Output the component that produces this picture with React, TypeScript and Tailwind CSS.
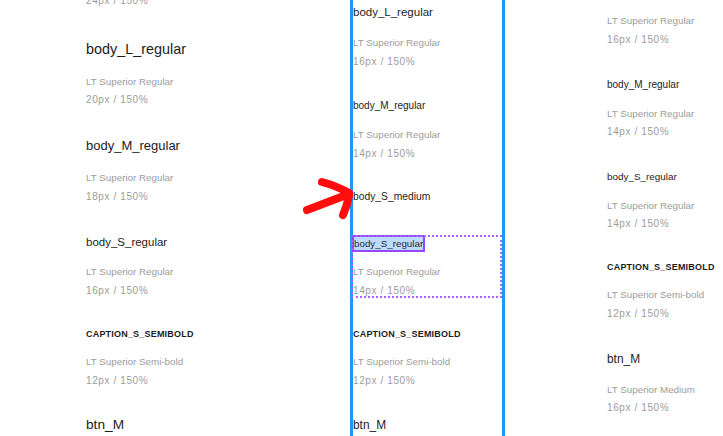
import React from "react";

function Title({ cls, children }: { cls: string; children: React.ReactNode }) {
  return (
    <div className={`h-[18px] leading-[18px] whitespace-nowrap text-[#1c1c1c] ${cls}`}>{children}</div>
  );
}

function Meta({ cls, name, size }: { cls: string; name: string; size: string }) {
  return (
    <div className={`text-[#9c9c9c] ${cls}`}>
      <div className="h-[18.5px] leading-[18.5px] text-[9.8px] whitespace-nowrap">{name}</div>
      <div className="h-[18.5px] leading-[18.5px] text-[10px] tracking-[0.6px] whitespace-nowrap">{size}</div>
    </div>
  );
}

export default function App() {
  return (
    <div className="relative flex w-[723px] h-[436px] overflow-hidden bg-white font-['Liberation_Sans',Arial,sans-serif]">
      {/* Left column */}
      <div className="w-[350px] shrink-0 pl-[86px] flex flex-col">
        <div className="-mt-[8px] h-[18.5px] leading-[18.5px] text-[10px] tracking-[0.6px] text-[#9c9c9c] whitespace-nowrap">
          24px / 150%
        </div>
        <Title cls="mt-[29px] text-[14.4px]">body_L_regular</Title>
        <Meta cls="mt-[15px]" name="LT Superior Regular" size="20px / 150%" />
        <Title cls="mt-[27.5px] text-[13px]">body_M_regular</Title>
        <Meta cls="mt-[14px]" name="LT Superior Regular" size="18px / 150%" />
        <Title cls="mt-[27px] text-[11.5px]">body_S_regular</Title>
        <Meta cls="mt-[12px]" name="LT Superior Regular" size="16px / 150%" />
        <Title cls="mt-[25px] text-[9px] font-bold tracking-[0.2px]">CAPTION_S_SEMIBOLD</Title>
        <Meta cls="mt-[10px]" name="LT Superior Semi-bold" size="12px / 150%" />
        <Title cls="mt-[25.5px] text-[13.7px]">btn_M</Title>
        <Meta cls="mt-[12px]" name="LT Superior Medium" size="16px / 150%" />
      </div>

      {/* Middle column framed */}
      <div className="w-[155px] shrink-0 h-full border-x-[3px] border-[#2196f3] flex flex-col">
        <Title cls="mt-[3px] text-[11.5px]">body_L_regular</Title>
        <Meta cls="mt-[13px]" name="LT Superior Regular" size="16px / 150%" />
        <Title cls="mt-[25.5px] text-[10px]">body_M_regular</Title>
        <Meta cls="mt-[11.5px]" name="LT Superior Regular" size="14px / 150%" />
        <Title cls="mt-[25px] text-[10.3px]">body_S_medium</Title>
        <div className="relative mt-[29px]">
          <div className="flex">
            <span className="-ml-[1px] h-[17px] border-2 border-[#9747ff] bg-[#bcdcff] text-[9.8px] leading-[13px] text-[#2a2a2a] whitespace-nowrap">
              body_S_regular
            </span>
          </div>
          <Meta cls="mt-[11px]" name="LT Superior Regular" size="14px / 150%" />
          <div className="pointer-events-none absolute -left-[2px] right-0 top-0 h-[63px] border-2 border-dotted border-[#a866ff]" />
        </div>
        <Title cls="mt-[25px] text-[9px] font-bold tracking-[0.2px]">CAPTION_S_SEMIBOLD</Title>
        <Meta cls="mt-[10px]" name="LT Superior Semi-bold" size="12px / 150%" />
        <Title cls="mt-[26px] text-[11.9px]">btn_M</Title>
      </div>

      {/* Right column */}
      <div className="pl-[102px] flex flex-col">
        <Meta cls="mt-[12px]" name="LT Superior Regular" size="16px / 150%" />
        <Title cls="mt-[26.5px] text-[10px]">body_M_regular</Title>
        <Meta cls="mt-[11.25px]" name="LT Superior Regular" size="14px / 150%" />
        <Title cls="mt-[25.75px] text-[9.9px]">body_S_regular</Title>
        <Meta cls="mt-[11.25px]" name="LT Superior Regular" size="14px / 150%" />
        <Title cls="mt-[24.25px] text-[9px] font-bold tracking-[0.2px]">CAPTION_S_SEMIBOLD</Title>
        <Meta cls="mt-[10.25px]" name="LT Superior Semi-bold" size="12px / 150%" />
        <Title cls="mt-[26.75px] text-[11.9px]">btn_M</Title>
        <Meta cls="mt-[12.75px]" name="LT Superior Medium" size="16px / 150%" />
      </div>

      {/* Red hand-drawn arrow */}
      <svg
        className="pointer-events-none absolute left-0 top-0"
        width="723"
        height="436"
        viewBox="0 0 723 436"
        fill="none"
      >
        <g stroke="#ff0d0d" strokeWidth="8" strokeLinecap="round" strokeLinejoin="round">
          <path d="M307 210 Q 328 202 349 194" />
          <path d="M322 182 Q 337 186 349 193" />
          <path d="M349 196 Q 347 206 343 215" />
        </g>
      </svg>
    </div>
  );
}
